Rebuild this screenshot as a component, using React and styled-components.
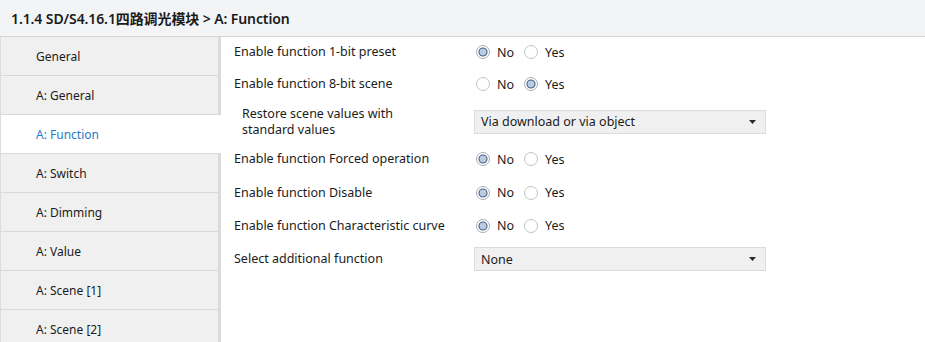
import React from "react";
import styled, { createGlobalStyle } from "styled-components";

const Global = createGlobalStyle`
  html, body { margin: 0; padding: 0; background: #ffffff; }
  body { font-family: "Noto Sans", "Noto Sans CJK SC", sans-serif; color: #1b1b1b; }
  * { box-sizing: border-box; }
`;

const Page = styled.div`
  width: 925px;
  height: 342px;
  overflow: hidden;
  display: flex;
  flex-direction: column;
  background: #fff;
`;

const Header = styled.div`
  height: 37px;
  flex: none;
  display: flex;
  align-items: center;
  padding-left: 11px;
  background: #f3f4f6;
  border-bottom: 1px solid #d3d3d3;
  font-size: 14px;
  font-weight: 600;
  color: #1a1a1a;
  letter-spacing: -0.1px;
`;

const Body = styled.div`
  flex: 1;
  display: flex;
  min-height: 0;
`;

const Sidebar = styled.nav`
  width: 221px;
  flex: none;
  display: flex;
  flex-direction: column;
  background: #dadada;
  border-left: 1px solid #dcdcdc;
`;

const NavItem = styled.div`
  height: 39px;
  flex: none;
  width: ${(p) => (p.$active ? "220px" : "217px")};
  display: flex;
  align-items: center;
  padding-left: 35px;
  background: ${(p) => (p.$active ? "#ffffff" : "#f0f0f0")};
  border-bottom: 1px solid #d9d9d9;
  font-size: 12px;
  color: ${(p) => (p.$active ? "#1f7bc8" : "#1b1b1b")};
`;

const Content = styled.div`
  flex: 1;
  padding-left: 13px;
  display: flex;
  flex-direction: column;
`;

const Row = styled.div`
  height: ${(p) => p.$h}px;
  display: grid;
  grid-template-columns: 240px 292px;
  align-items: center;
`;

const Label = styled.div`
  font-size: 12.5px;
  line-height: 16px;
  padding-left: ${(p) => (p.$indent ? "8px" : "0")};
  color: #1b1b1b;
`;

const Options = styled.div`
  display: flex;
  align-items: center;
  padding-left: 2px;
  gap: 10px;
`;

const Option = styled.label`
  display: flex;
  align-items: center;
  gap: 7px;
  font-size: 12.5px;
  color: #1b1b1b;
`;

const Select = styled.div`
  height: 24px;
  display: flex;
  align-items: center;
  justify-content: space-between;
  padding: 0 9px 0 6px;
  background: #f0f0f0;
  border: 1px solid #dcdcdc;
  font-size: 12.5px;
  color: #1b1b1b;
`;

const Radio = ({ checked }) => (
  <svg width="14" height="14" viewBox="0 0 14 14">
    <circle cx="7" cy="7" r="6.5" fill="#fff" stroke={checked ? "#a7adb6" : "#c2c2c2"} />
    {checked && <circle cx="7" cy="7" r="4" fill="#bccbdd" stroke="#3f5f88" strokeWidth="1.1" />}
  </svg>
);

const Arrow = () => (
  <svg width="7" height="4" viewBox="0 0 7 4">
    <path d="M0 0 H7 L3.5 4 Z" fill="#2a2a2a" />
  </svg>
);

const YesNo = ({ value }) => (
  <Options>
    <Option>
      <Radio checked={value === "no"} />
      No
    </Option>
    <Option>
      <Radio checked={value === "yes"} />
      Yes
    </Option>
  </Options>
);

const nav = [
  "General",
  "A: General",
  "A: Function",
  "A: Switch",
  "A: Dimming",
  "A: Value",
  "A: Scene [1]",
  "A: Scene [2]",
];

export default function App() {
  return (
    <Page>
      <Global />
      <Header>1.1.4 SD/S4.16.1四路调光模块 &gt; A: Function</Header>
      <Body>
        <Sidebar>
          {nav.map((n) => (
            <NavItem key={n} $active={n === "A: Function"}>
              {n}
            </NavItem>
          ))}
        </Sidebar>
        <Content>
          <Row $h={30}>
            <Label>Enable function 1-bit preset</Label>
            <YesNo value="no" />
          </Row>
          <Row $h={34}>
            <Label>Enable function 8-bit scene</Label>
            <YesNo value="yes" />
          </Row>
          <Row $h={41}>
            <Label $indent>
              Restore scene values with
              <br />
              standard values
            </Label>
            <Select>
              Via download or via object
              <Arrow />
            </Select>
          </Row>
          <Row $h={34}>
            <Label>Enable function Forced operation</Label>
            <YesNo value="no" />
          </Row>
          <Row $h={33}>
            <Label>Enable function Disable</Label>
            <YesNo value="no" />
          </Row>
          <Row $h={33}>
            <Label>Enable function Characteristic curve</Label>
            <YesNo value="no" />
          </Row>
          <Row $h={34}>
            <Label>Select additional function</Label>
            <Select>
              None
              <Arrow />
            </Select>
          </Row>
        </Content>
      </Body>
    </Page>
  );
}
